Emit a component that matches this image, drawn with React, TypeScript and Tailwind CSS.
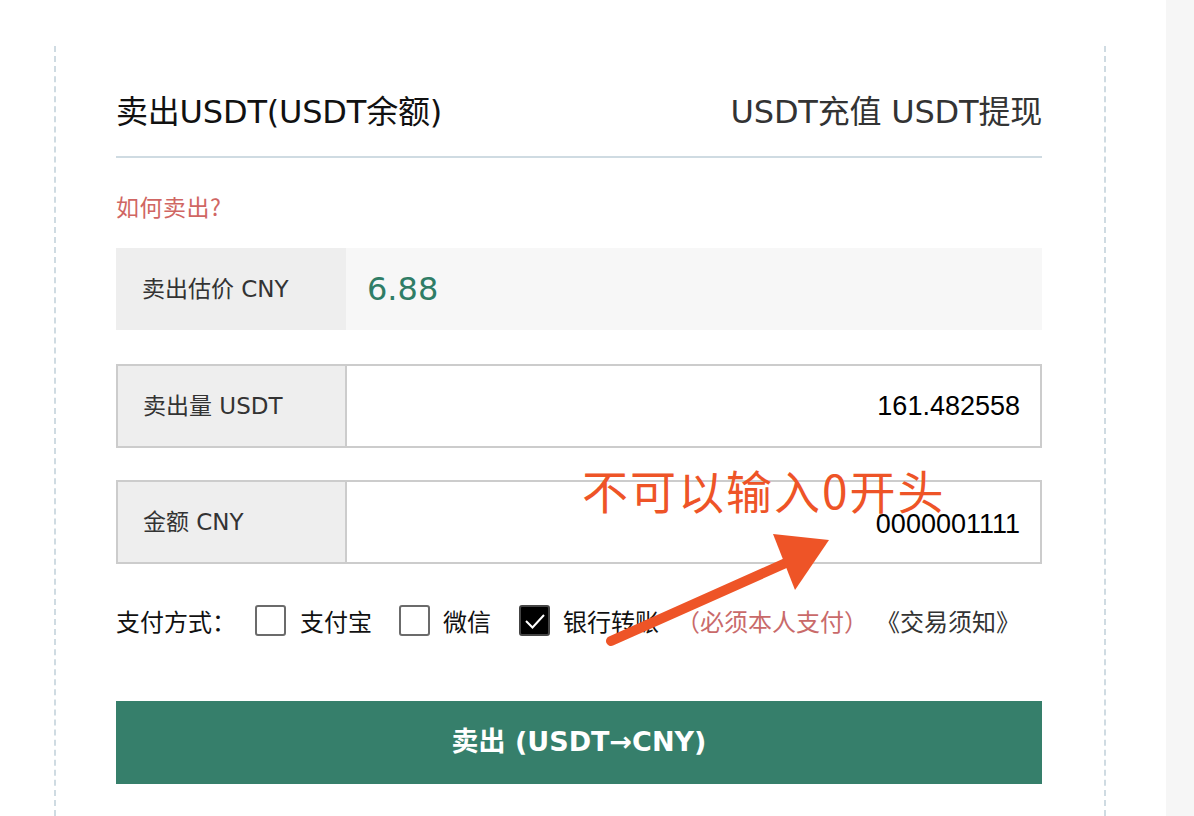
import React from "react";

const FONT = '"DejaVu Sans", "Noto Sans CJK SC", sans-serif';
const CJK = '"Noto Sans CJK SC", sans-serif';

function Box({ checked }: { checked?: boolean }) {
  return checked ? (
    <span className="flex h-[31px] w-[31px] shrink-0 items-center justify-center rounded-[3px] border-2 border-[#444] bg-black">
      <svg width="22" height="18" viewBox="0 0 22 18">
        <path d="M2 9 L8.5 15.5 L20 3" fill="none" stroke="white" strokeWidth="2" />
      </svg>
    </span>
  ) : (
    <span className="block h-[31px] w-[31px] shrink-0 rounded-[3px] border-2 border-[#6b6b6b] bg-white" />
  );
}

export default function App() {
  return (
    <div className="flex h-[816px] w-[1194px] overflow-hidden bg-white text-[#222]" style={{ fontFamily: FONT }}>
      <div className="w-[54px] shrink-0" />
      <div className="relative mt-[46px] w-[1052px] shrink-0 border-x-2 border-dashed border-[#cfdbe2] pl-[60px] pr-[62px] pt-[46px]">
        <div className="flex h-[40px] items-center justify-between whitespace-nowrap">
          <div className="text-[32px] tracking-[-0.2px] text-[#111]">卖出USDT(USDT余额)</div>
          <div className="text-[32px] tracking-[-0.2px] text-[#333]">USDT充值 USDT提现</div>
        </div>
        <div className="mt-[24px] h-[2px] bg-[#cfdbe2]" />
        <div className="mt-[34px] flex h-[28px] items-center text-[23px] tracking-[0.5px] text-[#d06663]" style={{ fontFamily: CJK }}>
          如何卖出?
        </div>

        <div className="mt-[28px] flex h-[82px]">
          <div className="flex w-[230px] items-center bg-[#eeeeee] pl-[26px] text-[23px] text-[#333]">卖出估价 CNY</div>
          <div className="flex flex-1 items-center bg-[#f7f7f7] pl-[21px] text-[32px] text-[#2f7d66]">6.88</div>
        </div>

        <div className="mt-[34px] flex h-[84px] border-2 border-[#cccccc]">
          <div className="flex w-[229px] items-center border-r-2 border-[#cccccc] bg-[#eeeeee] pl-[25px] text-[23px] text-[#333]">卖出量 USDT</div>
          <div className="flex flex-1 items-center justify-end bg-white pr-[20px] text-[27px] text-black" style={{ fontFamily: '"Liberation Sans", sans-serif' }}>
            161.482558
          </div>
        </div>

        <div className="mt-[32px] flex h-[84px] border-2 border-[#cccccc]">
          <div className="flex w-[229px] items-center border-r-2 border-[#cccccc] bg-[#eeeeee] pl-[25px] text-[23px] text-[#333]">金额 CNY</div>
          <div className="flex flex-1 items-center justify-end bg-white pr-[20px] pt-[4px] text-[27px] leading-none text-black" style={{ fontFamily: '"Liberation Sans", sans-serif' }}>
            0000001111
          </div>
        </div>

        <div className="mt-[41px] flex h-[31px] items-center whitespace-nowrap text-[24px] text-[#111]" style={{ fontFamily: CJK }}>
          <span className="mr-[19px]">支付方式：</span>
          <Box />
          <span className="ml-[14px] mr-[27px]">支付宝</span>
          <Box />
          <span className="ml-[13px] mr-[28px]">微信</span>
          <Box checked />
          <span className="ml-[13px]">银行转账</span>
          <span className="ml-[17px] text-[#c96a6a]">（必须本人支付）</span>
          <span className="ml-[8px] text-[#333]">《交易须知》</span>
        </div>

        <button className="mt-[65px] flex h-[83px] w-full items-center justify-center bg-[#367f6b] text-[27px] font-bold text-white">
          卖出 (USDT→CNY)
        </button>

        {/* annotation */}
        <div
          className="absolute left-[526px] top-[425px] whitespace-nowrap text-[46px] leading-[36px] tracking-[2px] text-[#ee5427]"
          style={{ fontFamily: CJK }}
        >
          不可以输入0开头
        </div>
        <svg className="absolute left-[540px] top-[480px]" width="260" height="130" viewBox="0 0 260 130">
          <path d="M15 115 L192 36" stroke="#ee5427" strokeWidth="10" strokeLinecap="round" fill="none" />
          <polygon points="177,8 233,14 199,64" fill="#ee5427" />
        </svg>
      </div>
      <div className="w-[60px] shrink-0" />
      <div className="flex-1 bg-[#f6f6f6]" />
    </div>
  );
}
